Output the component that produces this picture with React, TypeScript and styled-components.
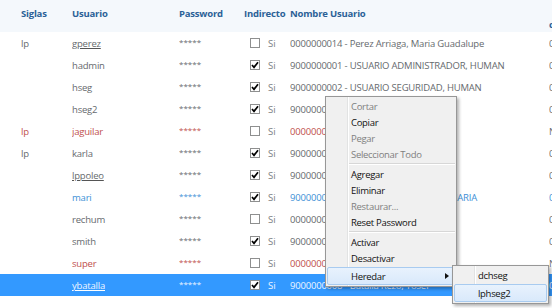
import React from 'react';
import styled, { createGlobalStyle } from 'styled-components';

const GlobalStyle = createGlobalStyle`
  html, body { margin: 0; padding: 0; background: #fff; }
  body { font-family: "Open Sans", "Noto Sans", sans-serif; }
`;

type Tone = 'normal' | 'red' | 'blue' | 'sel';

const toneColor: Record<Tone, string> = {
  normal: '#666a6e',
  red: '#c0504d',
  blue: '#3d8fd6',
  sel: '#eef5ff',
};

const COLS = '21px 51px 107px 65px 46px 259px 60px';

const Screen = styled.div`
  position: relative;
  width: 552px;
  height: 308px;
  overflow: hidden;
  background: #fff;
`;

const HeaderRow = styled.div`
  display: grid;
  grid-template-columns: ${COLS};
  height: 32px;
  background: #f4f8fc;
`;

const HeadCell = styled.div<{ $low?: boolean }>`
  padding-top: ${p => (p.$low ? '18px' : '7px')};
  font-size: 9.5px;
  font-weight: 700;
  letter-spacing: -0.2px;
  color: #2b6197;
  white-space: nowrap;
`;

const Row = styled.div<{ $sel?: boolean }>`
  display: grid;
  grid-template-columns: ${COLS};
  align-items: center;
  height: 22px;
  background: ${p => (p.$sel ? '#3399ff' : 'transparent')};
`;

const Cell = styled.div<{ $tone: Tone; $link?: boolean }>`
  font-size: 9.5px;
  letter-spacing: -0.2px;
  color: ${p => toneColor[p.$tone]};
  text-decoration: ${p => (p.$link ? 'underline' : 'none')};
  text-decoration-color: ${p => (p.$tone === 'sel' ? '#fff' : '#555')};
  white-space: nowrap;
  overflow: hidden;
`;

const Stars = styled(Cell)`
  font-size: 8px;
  letter-spacing: 0;
  padding-bottom: 3px;
`;

const CheckCell = styled.div`
  display: flex;
  align-items: center;
  gap: 8px;
  padding-left: 6px;
`;

const Box = styled.span`
  display: inline-flex;
  align-items: center;
  justify-content: center;
  width: 10px;
  height: 10px;
  box-sizing: border-box;
  border: 1px solid #8e8f8f;
  background: #fff;
`;

const Si = styled.span<{ $tone: Tone }>`
  font-size: 9.5px;
  color: ${p => (p.$tone === 'sel' ? '#eef5ff' : '#7a7e82')};
`;

const Menu = styled.div`
  position: absolute;
  left: 325px;
  top: 96px;
  width: 132px;
  box-sizing: border-box;
  padding: 1px;
  border: 1px solid #979797;
  background-color: #f0f0f0;
  background-image: linear-gradient(
    to right,
    transparent 21px,
    #e2e3e3 21px,
    #e2e3e3 22px,
    #ffffff 22px,
    #ffffff 23px,
    transparent 23px
  );
  box-shadow: 2px 2px 3px rgba(0, 0, 0, 0.3);
  font-family: "Open Sans", "Noto Sans", sans-serif;
`;

const Item = styled.div<{ $disabled?: boolean; $hot?: boolean }>`
  position: relative;
  display: flex;
  align-items: center;
  height: ${p => (p.$hot ? '18px' : '16px')};
  margin-top: ${p => (p.$hot ? '1px' : '0')};
  padding-left: ${p => (p.$hot ? '23px' : '24px')};
  box-sizing: border-box;
  font-size: 9.5px;
  letter-spacing: -0.3px;
  color: ${p => (p.$disabled ? '#7f7f7f' : '#111')};
  border: ${p => (p.$hot ? '1px solid #a8cbf0' : 'none')};
  border-radius: 2px;
  background: ${p => (p.$hot ? 'linear-gradient(#e8f2fd, #d9e9fb)' : 'transparent')};
  white-space: nowrap;
`;

const Separator = styled.div`
  height: 1px;
  margin: 1px 0 1px 22px;
  background: #d7d7d7;
  border-bottom: 1px solid #fff;
`;

const Arrow = styled.span`
  position: absolute;
  right: 5px;
  top: 5px;
  width: 0;
  height: 0;
  border-top: 3px solid transparent;
  border-bottom: 3px solid transparent;
  border-left: 4px solid #111;
`;

const SubMenu = styled(Menu)`
  left: 452px;
  top: 265px;
  width: 97px;
`;

const users = [
  { sig: 'lp', user: 'gperez', link: true, ind: false, name: '0000000014 -  Perez Arriaga, Maria Guadalupe', last: '0' },
  { sig: '', user: 'hadmin', ind: true, name: '9000000001 -  USUARIO ADMINISTRADOR, HUMAN', last: '0' },
  { sig: '', user: 'hseg', ind: true, name: '9000000002 -  USUARIO  SEGURIDAD, HUMAN', last: '0' },
  { sig: '', user: 'hseg2', ind: true, name: '9000000003 -  USUARIO SEG, HUMAN', last: '0' },
  { sig: 'lp', user: 'jaguilar', tone: 'red' as Tone, ind: false, name: '0000000021 -  Aguilar, Jose', last: 'N' },
  { sig: 'lp', user: 'karla', ind: true, name: '9000000004 -  Karla, Karla', last: '0' },
  { sig: '', user: 'lppoleo', link: true, ind: true, name: '9000000005 -  Poleo, Luis', last: '0' },
  { sig: '', user: 'mari', tone: 'blue' as Tone, ind: true, name: '9000000006 -  USUARIO CAPTURISTA, MARIA', last: '0' },
  { sig: '', user: 'rechum', ind: false, name: '0000000030 -  Recursos Humanos', last: '0' },
  { sig: '', user: 'smith', ind: true, name: '9000000007 -  Smith, John', last: '0' },
  { sig: '', user: 'super', tone: 'red' as Tone, ind: false, name: '0000000001 -  Super, Usuario', last: 'N' },
  { sig: '', user: 'ybatalla', link: true, sel: true, ind: true, name: '9000000008 -  Batalla Rezo, Yosef', last: '0' },
];

const Check = () => (
  <svg width="8" height="8" viewBox="0 0 8 8">
    <path d="M1 4 L3 6.3 L7 1.2" fill="none" stroke="#000" strokeWidth="1.7" />
  </svg>
);

export default function App() {
  return (
    <Screen>
      <GlobalStyle />
      <HeaderRow>
        <span />
        <HeadCell>Siglas</HeadCell>
        <HeadCell>Usuario</HeadCell>
        <HeadCell>Password</HeadCell>
        <HeadCell>Indirecto</HeadCell>
        <HeadCell>Nombre Usuario</HeadCell>
        <HeadCell $low>correo</HeadCell>
      </HeaderRow>
      {users.map(u => {
        const tone: Tone = u.sel ? 'sel' : u.tone ?? 'normal';
        return (
          <Row key={u.user} $sel={u.sel}>
            <span />
            <Cell $tone={tone === 'blue' ? 'normal' : tone}>{u.sig}</Cell>
            <Cell $tone={tone} $link={u.link}>{u.user}</Cell>
            <Stars $tone={tone}>*****</Stars>
            <CheckCell>
              <Box>{u.ind && <Check />}</Box>
              <Si $tone={tone}>Si</Si>
            </CheckCell>
            <Cell $tone={tone}>{u.name}</Cell>
            <Cell $tone={tone === 'red' ? 'normal' : tone}>{u.last}</Cell>
          </Row>
        );
      })}

      <Menu>
        <Item $disabled>Cortar</Item>
        <Item>Copiar</Item>
        <Item $disabled>Pegar</Item>
        <Item $disabled>Seleccionar Todo</Item>
        <Separator />
        <Item>Agregar</Item>
        <Item>Eliminar</Item>
        <Item $disabled>Restaurar...</Item>
        <Item>Reset Password</Item>
        <Separator />
        <Item>Activar</Item>
        <Item>Desactivar</Item>
        <Item $hot>
          Heredar
          <Arrow />
        </Item>
      </Menu>

      <SubMenu>
        <Item>dchseg</Item>
        <Item $hot>lphseg2</Item>
      </SubMenu>
    </Screen>
  );
}
